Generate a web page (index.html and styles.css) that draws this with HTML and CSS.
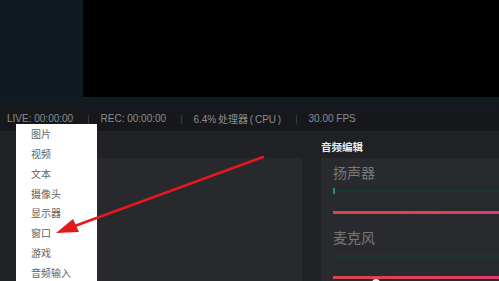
FILE: index.html
```html
<!DOCTYPE html>
<html lang="zh-CN">
<head>
<meta charset="utf-8">
<title>直播工具</title>
<link rel="stylesheet" href="styles.css">
</head>
<body>
<div class="app">
  <div class="top">
    <div class="scenes"></div>
    <div class="preview"></div>
  </div>
  <div class="band"></div>
  <div class="status">
    <span>LIVE: 00:00:00</span><span class="sep">|</span>
    <span>REC: 00:00:00</span><span class="sep">|</span>
    <span class="cpu">6.4% 处理器 ( CPU )</span><span class="sep">|</span>
    <span>30.00 FPS</span>
  </div>
  <div class="dock">
    <div class="col col-sources">
      <div class="col-head"></div>
      <div class="box"></div>
    </div>
    <div class="col col-audio">
      <div class="col-head"><span class="title">音频编辑</span></div>
      <div class="box audio-box">
        <div class="channel">
          <div class="ch-label">扬声器</div>
          <div class="meter"><span class="mark"></span></div>
          <div class="slider"></div>
        </div>
        <div class="channel">
          <div class="ch-label">麦克风</div>
          <div class="meter"></div>
          <div class="slider"><span class="thumb"></span></div>
        </div>
      </div>
    </div>
  </div>

  <ul class="menu">
    <li>图片</li>
    <li>视频</li>
    <li>文本</li>
    <li>摄像头</li>
    <li>显示器</li>
    <li>窗口</li>
    <li>游戏</li>
    <li>音频输入</li>
  </ul>

  <svg class="arrow" width="499" height="281" viewBox="0 0 499 281">
    <line x1="263" y1="157" x2="72" y2="227" stroke="#e3191c" stroke-width="2.6" stroke-linecap="round"/>
    <polygon points="56,233 79,232 73,219" fill="#e3191c"/>
  </svg>
</div>
</body>
</html>
```

FILE: styles.css
```css
html, body {
  margin: 0;
  padding: 0;
}
body {
  width: 499px;
  height: 281px;
  overflow: hidden;
  background: #1f2125;
  font-family: "Liberation Sans", "Noto Sans CJK SC", sans-serif;
}
.app {
  position: relative;
  width: 499px;
  height: 281px;
  display: flex;
  flex-direction: column;
  overflow: hidden;
}
.top {
  height: 97px;
  display: flex;
  flex-shrink: 0;
}
.scenes {
  width: 83px;
  background: #0e1a20;
}
.preview {
  flex: 1;
  background: #000;
}
.band {
  height: 9px;
  flex-shrink: 0;
  background: linear-gradient(to bottom, #0e1c24, #131a1f);
}
.status {
  height: 25px;
  flex-shrink: 0;
  background: #16181b;
  display: flex;
  align-items: center;
  padding-left: 7px;
  font-size: 10px;
  color: #8a8d91;
  white-space: nowrap;
}
.cpu {
  word-spacing: -1px;
}
.sep {
  color: #4a4d51;
  margin: 0 11px 0 14px;
  font-size: 9px;
}
.dock {
  flex: 1;
  display: flex;
  gap: 19px;
  padding-left: 16px;
  min-height: 0;
}
.col {
  display: flex;
  flex-direction: column;
}
.col-sources {
  width: 286px;
}
.col-audio {
  flex: 1;
}
.col-head {
  height: 27px;
  flex-shrink: 0;
  display: flex;
  align-items: center;
  padding-top: 3px;
  box-sizing: border-box;
}
.title {
  font-family: "Noto Sans CJK SC", sans-serif;
  font-size: 10.5px;
  font-weight: 700;
  color: #ececec;
}
.box {
  flex: 1;
  background: #27292d;
}
.audio-box {
  background: #292a2e;
  padding-left: 12px;
  padding-top: 6px;
}
.channel {
  display: flex;
  flex-direction: column;
  margin-bottom: 15px;
}
.ch-label {
  font-family: "Noto Sans CJK SC", sans-serif;
  font-size: 14px;
  line-height: 16px;
  height: 16px;
  color: #77787b;
}
.meter {
  position: relative;
  height: 2px;
  margin-top: 10px;
  background: #163a31;
}
.mark {
  position: absolute;
  left: 0;
  top: -2px;
  width: 2px;
  height: 6px;
  background: #2b8c72;
}
.slider {
  position: relative;
  height: 3px;
  margin-top: 19px;
  background: linear-gradient(to right, #d9464b, #e2405a 60%, #e4386c);
}
.thumb {
  position: absolute;
  left: 39px;
  top: 3px;
  width: 8px;
  height: 8px;
  border-radius: 50%;
  background: #f2f2f2;
}
.menu {
  position: absolute;
  left: 16px;
  top: 124px;
  width: 81px;
  height: 170px;
  margin: 0;
  padding: 0;
  list-style: none;
  background: #ffffff;
}
.menu li {
  height: 19.85px;
  line-height: 19.85px;
  padding-left: 15px;
  font-family: "Noto Sans CJK SC", sans-serif;
  font-size: 10px;
  color: #606060;
}
.arrow {
  position: absolute;
  left: 0;
  top: 0;
  pointer-events: none;
}
```
